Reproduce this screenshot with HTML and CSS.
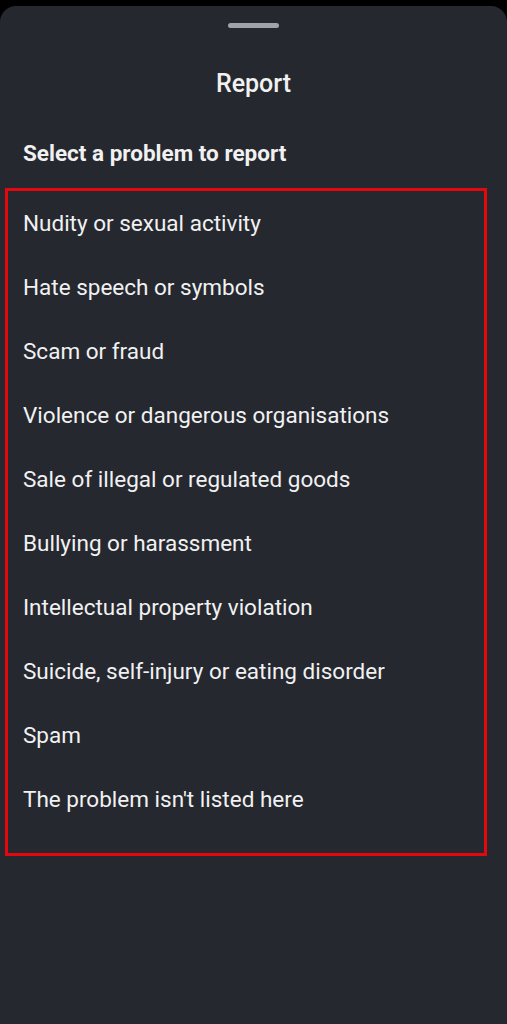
FILE: index.html
```html
<!DOCTYPE html>
<html lang="en">

<head>
    <meta charset="UTF-8">
    <meta name="viewport" content="width=device-width, initial-scale=1.0">
    <title>Report</title>
    <link rel="stylesheet" href="styles.css">
</head>

<body>
    <div class="sheet">
        <div class="handle"></div>
        <h1 class="title">Report</h1>
        <h2 class="subtitle">Select a problem to report</h2>

        <!-- options -->
        <div class="options">
            <div class="row">Nudity or sexual activity</div>
            <div class="row">Hate speech or symbols</div>
            <div class="row">Scam or fraud</div>
            <div class="row">Violence or dangerous organisations</div>
            <div class="row">Sale of illegal or regulated goods</div>
            <div class="row">Bullying or harassment</div>
            <div class="row">Intellectual property violation</div>
            <div class="row">Suicide, self-injury or eating disorder</div>
            <div class="row">Spam</div>
            <div class="row">The problem isn't listed here</div>
        </div>
    </div>
</body>

</html>
```

FILE: styles.css
```css
* {
    padding: 0;
    margin: 0;
    box-sizing: border-box;
}

body {
    background-color: #000;
    font-family: Roboto, "Liberation Sans", sans-serif;
    color: #f1f1f2;
    height: 1024px;
    overflow: hidden;
}

.sheet {
    margin-top: 6px;
    height: 1018px;
    background-color: #25282f;
    border-radius: 16px 16px 0 0;
    padding-top: 17px;
}

.handle {
    width: 51px;
    height: 5px;
    margin: 0 auto;
    border-radius: 3px;
    background-color: #9fa3aa;
}

.title {
    font-size: 25px;
    font-weight: 500;
    text-align: center;
    line-height: 30px;
    margin-top: 41px;
}

.subtitle {
    font-size: 22.5px;
    font-weight: 700;
    line-height: 30px;
    margin-top: 39px;
    padding-left: 23px;
}

.options {
    margin: 20px 0 0 5px;
    width: 482px;
    border: 3px solid #e3080e;
    padding-bottom: 22px;
}

.row {
    height: 64px;
    line-height: 64px;
    font-size: 22.5px;
    padding-left: 15px;
}
```
